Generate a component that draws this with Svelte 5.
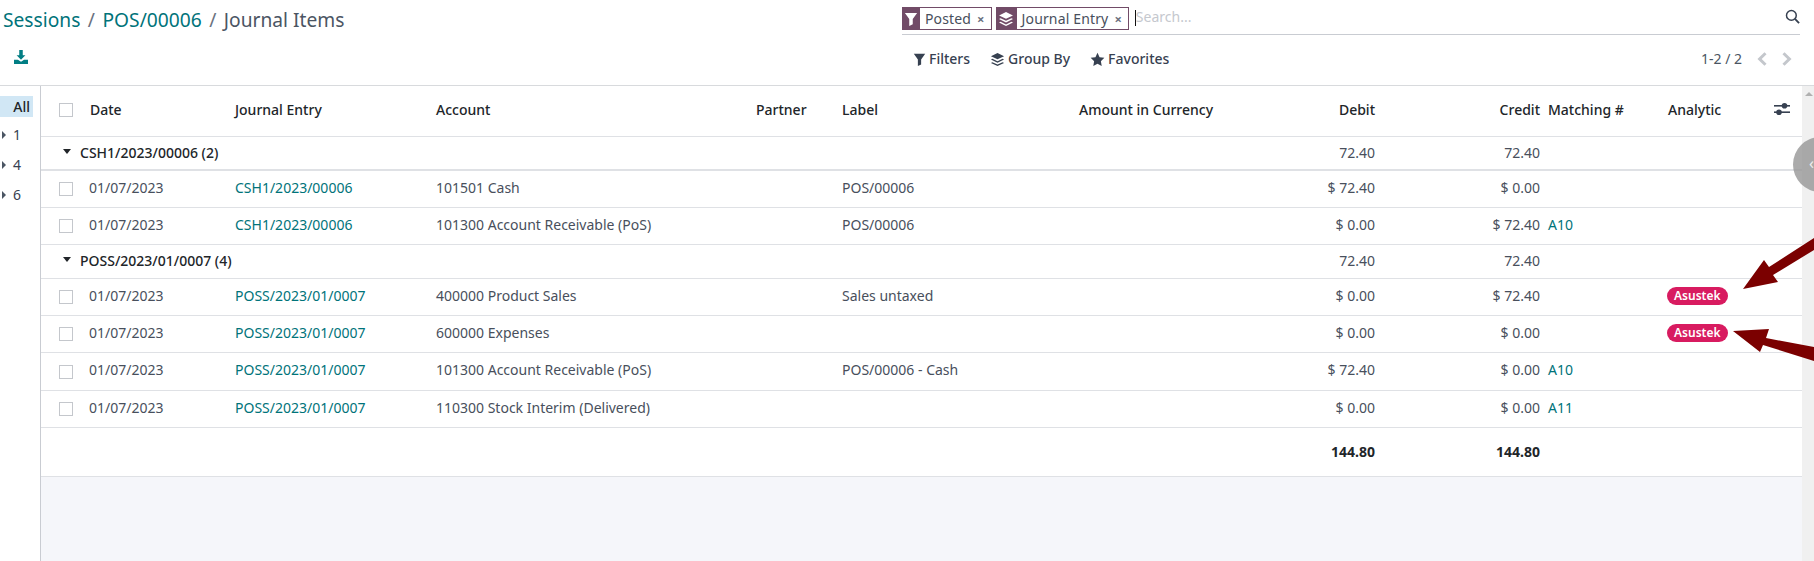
<script>
  const columns = [
    { key: "select", width: 45 },
    { key: "date", width: 145, label: "Date" },
    { key: "entry", width: 201, label: "Journal Entry" },
    { key: "account", width: 320, label: "Account" },
    { key: "partner", width: 86, label: "Partner" },
    { key: "label", width: 237, label: "Label" },
    { key: "amount", width: 175, label: "Amount in Currency" },
    { key: "debit", width: 129, label: "Debit", right: true },
    { key: "credit", width: 165, label: "Credit", right: true },
    { key: "matching", width: 120, label: "Matching #" },
    { key: "analytic", width: 106, label: "Analytic" },
    { key: "opt", width: 32 },
  ];

  const groups = [
    {
      name: "CSH1/2023/00006 (2)",
      debit: "72.40",
      credit: "72.40",
      thick: true,
      rows: [
        { entry: "CSH1/2023/00006", account: "101501 Cash", label: "POS/00006", debit: "$ 72.40", credit: "$ 0.00" },
        { entry: "CSH1/2023/00006", account: "101300 Account Receivable (PoS)", label: "POS/00006", debit: "$ 0.00", credit: "$ 72.40", matching: "A10" },
      ],
    },
    {
      name: "POSS/2023/01/0007 (4)",
      debit: "72.40",
      credit: "72.40",
      rows: [
        { entry: "POSS/2023/01/0007", account: "400000 Product Sales", label: "Sales untaxed", debit: "$ 0.00", credit: "$ 72.40", tag: "Asustek" },
        { entry: "POSS/2023/01/0007", account: "600000 Expenses", label: "", debit: "$ 0.00", credit: "$ 0.00", tag: "Asustek" },
        { entry: "POSS/2023/01/0007", account: "101300 Account Receivable (PoS)", label: "POS/00006 - Cash", debit: "$ 72.40", credit: "$ 0.00", matching: "A10", tall: true },
        { entry: "POSS/2023/01/0007", account: "110300 Stock Interim (Delivered)", label: "", debit: "$ 0.00", credit: "$ 0.00", matching: "A11" },
      ],
    },
  ];

  const filter = "M1 1h14L10 8v6l-4 2V8z";
  const layers = "M8 1l7 3.4L8 7.8 1 4.4zM2.6 7.2L8 9.8l5.4-2.6L15 8l-7 3.4L1 8zM2.6 10.8L8 13.4l5.4-2.6 1.6.8L8 15 1 11.6z";
  const star = "M8 .8l2.2 4.7 5.1.7-3.7 3.6.9 5.1L8 12.5 3.5 15l.9-5.1L.7 6.2l5.1-.7z";
</script>

<div class="page">
  <header class="panel">
    <nav class="crumbs">
      <a href="#s">Sessions</a><span class="sep">/</span><a href="#p">POS/00006</a><span class="sep">/</span><span>Journal Items</span>
    </nav>
    <div class="search">
      <div class="facet">
        <span class="facet-icon first"><svg width="14" height="14" viewBox="0 0 16 16"><path d={filter} fill="#fff" /></svg></span>
        <span class="facet-text">Posted</span><span class="facet-x">×</span>
      </div>
      <div class="facet">
        <span class="facet-icon"><svg width="16" height="16" viewBox="0 0 16 16"><path d={layers} fill="#fff" /></svg></span>
        <span class="facet-text">Journal Entry</span><span class="facet-x">×</span>
      </div>
      <span class="cursor"></span>
      <span class="placeholder">Search...</span>
      <svg class="lens" width="15" height="15" viewBox="0 0 16 16" fill="none" stroke="#374151" stroke-width="1.6"><circle cx="6.8" cy="6.8" r="5.2" /><path d="M10.6 10.6L15 15" stroke-width="2" /></svg>
    </div>
    <div class="actions">
      <svg width="14" height="14" viewBox="0 0 16 16" fill="#017e84"><path d="M6 0h4v6h3l-5 5-5-5h3z" /><path d="M0 11h4.5L8 13.5l3.5-2.5H16v5H0z" /></svg>
    </div>
    <div class="tools">
      <div class="menus">
        <span class="menu"><svg width="13" height="13" viewBox="0 0 16 16"><path d={filter} fill="#374151" /></svg>Filters</span>
        <span class="menu"><svg width="15" height="15" viewBox="0 0 16 16"><path d={layers} fill="#374151" /></svg>Group By</span>
        <span class="menu"><svg width="15" height="15" viewBox="0 0 16 16"><path d={star} fill="#374151" /></svg>Favorites</span>
      </div>
      <div class="pager">
        <span>1-2 / 2</span>
        <svg class="prev" width="10" height="14" viewBox="0 0 10 14" fill="none" stroke="#c4c7cc" stroke-width="3"><path d="M8.5 1.2L2.6 7l5.9 5.8" /></svg>
        <svg class="next" width="10" height="14" viewBox="0 0 10 14" fill="none" stroke="#c4c7cc" stroke-width="3"><path d="M1.5 1.2L7.4 7l-5.9 5.8" /></svg>
      </div>
    </div>
  </header>

  <main class="body">
    <aside class="side">
      <div class="side-all">All</div>
      {#each ["1", "4", "6"] as item}
        <div class="side-item"><span class="tri-right"></span>{item}</div>
      {/each}
    </aside>

    <section class="content">
      <table>
        <colgroup>
          {#each columns as col}
            <col style="width:{col.width}px" />
          {/each}
        </colgroup>
        <thead>
          <tr>
            <th class="sel"><span class="check"></span></th>
            {#each columns.slice(1, -1) as col}
              <th class:right={col.right}>{col.label}</th>
            {/each}
            <th class="opt">
              <svg width="16" height="14" viewBox="0 0 16 14" fill="#374151"><rect y="3" width="16" height="1.6" /><rect y="9.4" width="16" height="1.6" /><circle cx="10.5" cy="3.8" r="2.8" /><circle cx="5" cy="10.2" r="2.8" /></svg>
            </th>
          </tr>
        </thead>
        <tbody>
          {#each groups as group}
            <tr class="group" class:thick={group.thick}>
              <td colspan="7"><span class="tri-down"></span>{group.name}</td>
              <td class="right num">{group.debit}</td>
              <td class="right num">{group.credit}</td>
              <td colspan="3"></td>
            </tr>
            {#each group.rows as row}
              <tr class="row" class:tall={row.tall}>
                <td class="sel"><span class="check"></span></td>
                <td class="date">01/07/2023</td>
                <td class="link">{row.entry}</td>
                <td>{row.account}</td>
                <td></td>
                <td>{row.label}</td>
                <td></td>
                <td class="right">{row.debit}</td>
                <td class="right">{row.credit}</td>
                <td class="match">{row.matching ?? ""}</td>
                <td>{#if row.tag}<span class="tag">{row.tag}</span>{/if}</td>
                <td></td>
              </tr>
            {/each}
          {/each}
        </tbody>
        <tfoot>
          <tr>
            <td colspan="7"></td>
            <td class="right">144.80</td>
            <td class="right">144.80</td>
            <td colspan="3"></td>
          </tr>
        </tfoot>
      </table>
    </section>

    <div class="scrollbar"><span class="scroll-up"></span></div>
  </main>

  <div class="handle"><span>‹</span></div>

  <svg class="arrows" width="1814" height="561" viewBox="0 0 1814 561" fill="#7b0000">
    <polygon points="1743,289 1764,260 1769,267 1814,238 1814,250 1773,275 1778,282" />
    <polygon points="1733,331 1769,329 1766,338 1814,347 1814,361 1763,345 1760,352" />
  </svg>
</div>

<style>
  :global(body) {
    margin: 0;
    background: #fff;
  }

  .page {
    position: relative;
    width: 1814px;
    height: 561px;
    overflow: hidden;
    display: flex;
    flex-direction: column;
    font-family: "Noto Sans", "Open Sans", sans-serif;
    font-size: 14px;
    color: #484f5c;
  }

  .panel {
    height: 85px;
    flex: none;
    display: grid;
    grid-template-columns: 902px 898px;
    grid-template-rows: 35px 50px;
    border-bottom: 1px solid #d8dadd;
  }

  .crumbs {
    padding-left: 3px;
    font-size: 19.2px;
    line-height: 40px;
    height: 35px;
    color: #4b5563;
    white-space: nowrap;
  }

  .crumbs a {
    color: #00737a;
    text-decoration: none;
  }

  .sep {
    margin: 0 7.5px;
    color: #6b7280;
  }

  .search {
    display: flex;
    align-items: flex-start;
    gap: 4px;
    padding-top: 7px;
    box-sizing: border-box;
    height: 35px;
    border-bottom: 1px solid #c9ccd2;
    position: relative;
  }

  .facet {
    display: flex;
    align-items: center;
    height: 23px;
    box-sizing: border-box;
    border: 1px solid #714b67;
    background: #fff;
  }

  .facet-icon {
    width: 21px;
    height: 23px;
    margin: -1px 0 -1px -1px;
    background: #714b67;
    display: flex;
    align-items: center;
    justify-content: center;
  }

  .facet-icon.first {
    width: 18px;
  }

  .facet-text {
    margin-left: 5px;
    line-height: 21px;
    letter-spacing: 0.15px;
  }

  .facet-x {
    margin: 0 6px;
    font-size: 13px;
    font-weight: 700;
    color: #6b7280;
    line-height: 18px;
  }

  .cursor {
    width: 1px;
    height: 16px;
    margin: 3px 0 0 2px;
    background: #111;
  }

  .placeholder {
    margin-left: -4px;
    line-height: 19px;
    color: #c5c8ce;
  }

  .lens {
    position: absolute;
    right: 0;
    top: 9px;
  }

  .actions {
    padding: 15px 0 0 14px;
    display: flex;
    align-items: flex-start;
  }

  .tools {
    display: flex;
    justify-content: space-between;
    align-items: flex-start;
    padding-top: 14px;
  }

  .menus {
    display: flex;
    gap: 20px;
    padding-left: 11px;
  }

  .menu {
    display: flex;
    align-items: center;
    gap: 3px;
    font-weight: 500;
    color: #374151;
    line-height: 20px;
  }

  .pager {
    display: flex;
    align-items: center;
    line-height: 20px;
    padding-right: 8px;
    color: #4b5563;
  }

  .prev {
    margin-left: 15px;
  }

  .next {
    margin-left: 15px;
  }

  .body {
    flex: 1;
    display: flex;
    min-height: 0;
  }

  .side {
    width: 40px;
    flex: none;
    border-right: 1px solid #c9ccd2;
    padding-top: 10px;
    font-size: 14px;
    color: #374151;
    box-sizing: content-box;
  }

  .side-all {
    width: 33px;
    height: 21px;
    line-height: 21px;
    margin-bottom: 3px;
    background: #d1e7f5;
    text-align: right;
    box-sizing: border-box;
    padding-right: 3px;
    font-weight: 500;
    color: #212529;
  }

  .side-item {
    height: 30px;
    line-height: 34px;
    display: flex;
    align-items: center;
    padding-left: 2px;
    gap: 7px;
  }

  .tri-right {
    width: 0;
    height: 0;
    border-left: 4px solid #4b5563;
    border-top: 4px solid transparent;
    border-bottom: 4px solid transparent;
  }

  .content {
    flex: 1;
    min-width: 0;
    background: #f5f6fa;
  }

  table {
    table-layout: fixed;
    width: 1761px;
    border-collapse: separate;
    border-spacing: 0;
    background: #fff;
  }

  th,
  td {
    padding: 0 4px;
    border-bottom: 1px solid #dfe1e5;
    white-space: nowrap;
    text-align: left;
    overflow: visible;
  }

  th {
    font-weight: 500;
    color: #212529;
    padding-bottom: 4px;
    box-sizing: border-box;
    height: 51px;
  }

  .right {
    text-align: right;
  }

  th.sel {
    padding: 0 4px 2px 18px;
  }

  .row td.sel {
    padding: 0 4px 0 18px;
  }

  .date {
    padding-left: 3px;
  }

  .opt {
    padding-left: 4px;
  }

  .opt svg {
    display: block;
  }

  .check {
    display: block;
    width: 14px;
    height: 14px;
    box-sizing: border-box;
    border: 1px solid #c4c7cc;
    background: #fff;
  }

  .group td {
    height: 34px;
    box-sizing: border-box;
    font-weight: 500;
    color: #212529;
    padding-bottom: 2px;
  }

  .group td.num {
    font-weight: 400;
    color: #484f5c;
  }

  .group.thick td {
    border-bottom-width: 2px;
    height: 34px;
  }

  .tri-down {
    display: inline-block;
    width: 0;
    height: 0;
    margin: 0 9px 5px 18px;
    vertical-align: middle;
    border-top: 5px solid #212529;
    border-left: 4.5px solid transparent;
    border-right: 4.5px solid transparent;
  }

  .row td {
    height: 37px;
    box-sizing: border-box;
    padding-bottom: 4px;
  }

  .row.tall td {
    height: 38px;
  }

  .link,
  .match {
    color: #00737a;
  }

  .tag {
    display: inline-block;
    margin-left: -1px;
    padding: 0 7px;
    height: 18px;
    line-height: 18px;
    border-radius: 9px;
    background: #d81b60;
    color: #fff;
    font-size: 12px;
    font-weight: 600;
    vertical-align: middle;
  }

  tfoot td {
    height: 49px;
    box-sizing: border-box;
    font-weight: 700;
    color: #212529;
    padding-bottom: 2px;
  }

  .scrollbar {
    width: 12px;
    flex: none;
    background: #f0f0f0;
    position: relative;
  }

  .scroll-up {
    position: absolute;
    left: 3px;
    top: 6px;
    width: 0;
    height: 0;
    border-left: 4px solid transparent;
    border-right: 4px solid transparent;
    border-bottom: 4px solid #b0b0b0;
  }

  .handle {
    position: absolute;
    left: 1793px;
    top: 137px;
    width: 55px;
    height: 55px;
    border-radius: 50%;
    background: rgba(150, 150, 150, 0.8);
    color: #eee;
    line-height: 52px;
    font-size: 16px;
    padding-left: 16px;
    box-sizing: border-box;
  }

  .arrows {
    position: absolute;
    left: 0;
    top: 0;
    pointer-events: none;
  }
</style>
